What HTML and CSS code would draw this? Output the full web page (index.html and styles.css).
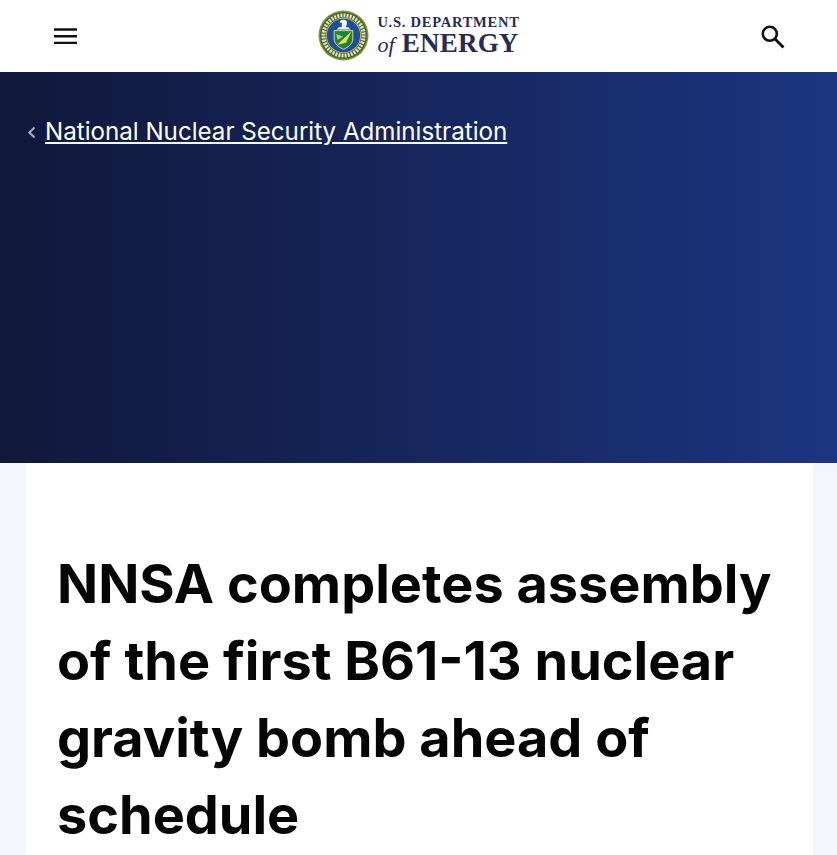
FILE: index.html
```html
<!DOCTYPE html>
<html lang="en">
<head>
  <meta charset="UTF-8">
  <title>NNSA completes assembly of the first B61-13 nuclear gravity bomb ahead of schedule</title>
  <link rel="stylesheet" href="styles.css">
</head>
<body>

  <header class="site-header">
    <button class="icon-btn menu-btn" aria-label="Menu">
      <svg width="24" height="24" viewBox="0 0 24 24"><path d="M0 4.300h23v2.400H0zM0 11h23v2.400H0zM0 17.700h23v2.400H0z" fill="#111"/></svg>
    </button>
    <a class="logo" href="#">
      <svg class="seal" width="51" height="51" viewBox="0 0 52 52">
        <circle cx="26" cy="26" r="25.500" fill="#7d9a2c"/>
        <circle cx="26" cy="26" r="24" fill="#46643a"/>
        <circle cx="26" cy="26" r="20.500" fill="none" stroke="#e4e4c0" stroke-width="4" stroke-dasharray="2 1.200"/>
        <circle cx="26" cy="26" r="18" fill="#c9b54e"/>
        <circle cx="26" cy="26" r="17" fill="#1c4f9c"/>
        <path d="M26 10c3 0 4 1.800 3.500 4l-1 3.500h2.500l2 2.500H19l2-2.500h3l.5-4-2.500-1c.5-1.700 2-2.500 3.500-2.500z" fill="#f4f4f0"/>
        <path d="M16.500 21h19v8.500c0 5-4.500 8.500-9.500 10.500-5-2-9.500-5.500-9.500-10.500z" fill="#1f8045" stroke="#e8dc80" stroke-width="1"/>
        <path d="M19.500 35.500 34 22l-5.500 11.500z" fill="#ecdf4c"/>
        <path d="M18.500 24.500l7 2.500-5.500 3.500z" fill="#a6d670"/>
      </svg>
      <span class="logo-text">
        <span class="logo-top">U.S. DEPARTMENT</span>
        <span class="logo-bottom"><i>of</i> ENERGY</span>
      </span>
    </a>
    <button class="icon-btn" aria-label="Search">
      <svg width="24" height="24" viewBox="0 0 24 24"><circle cx="8.800" cy="8.800" r="7" fill="none" stroke="#111" stroke-width="2.600"/><path d="M13.800 13.800 22.500 22.500" stroke="#111" stroke-width="3" fill="none"/></svg>
    </button>
  </header>

  <section class="hero">
    <nav class="crumb">
      <svg width="9" height="13" viewBox="0 0 9 13"><path d="M7.500 1.500 2.300 6.500l5.200 5" fill="none" stroke="#a9b0c4" stroke-width="2"/></svg>
      <a href="#">National Nuclear Security Administration</a>
    </nav>
  </section>

  <main class="card">
    <h1>NNSA completes assembly of the first B61-13 nuclear gravity bomb ahead of schedule</h1>
  </main>

</body>
</html>
```

FILE: styles.css
```css
body {
  font-family: Inter, "Noto Sans", sans-serif;
  background-color: #f4f6fb;
  margin: 0;
  height: 855px;
  overflow: hidden;
  display: flex;
  flex-direction: column;
}

.site-header {
  height: 72px;
  flex: none;
  background: white;
  display: flex;
  justify-content: space-between;
  align-items: center;
  padding: 0 52px 0 54px;
}

.icon-btn {
  background: none;
  border: 0;
  padding: 0;
  width: 24px;
  height: 24px;
  margin-top: 1px;
}

.menu-btn {
  margin-top: 0;
}

.logo {
  display: flex;
  align-items: center;
  gap: 8px;
  color: #262c55;
  text-decoration: none;
  margin-left: -1px;
}

.seal {
  margin-top: -1px;
}

.logo-text {
  display: flex;
  flex-direction: column;
  font-family: "Liberation Serif", serif;
  font-weight: bold;
}

.logo-top {
  font-size: 14.500px;
  line-height: 16px;
  letter-spacing: 0.75px;
}

.logo-bottom {
  font-size: 27px;
  line-height: 27px;
  letter-spacing: 0.2px;
}

.logo-bottom i {
  font-weight: normal;
  font-size: 22px;
}

.hero {
  height: 391px;
  flex: none;
  background: linear-gradient(90deg, #10183a, #1c3580);
  box-sizing: border-box;
  padding: 43px 0 0 27px;
}

.crumb {
  display: flex;
  align-items: center;
  gap: 9px;
}

.crumb a {
  color: white;
  font-size: 24.150px;
  line-height: 34px;
}

.card {
  flex: 1;
  background: white;
  margin: 0 24px 0 26px;
  padding: 82px 31px 0;
}

.card h1 {
  margin: 0;
  font-size: 54px;
  line-height: 77px;
  font-weight: 700;
  color: #050505;
}
```
